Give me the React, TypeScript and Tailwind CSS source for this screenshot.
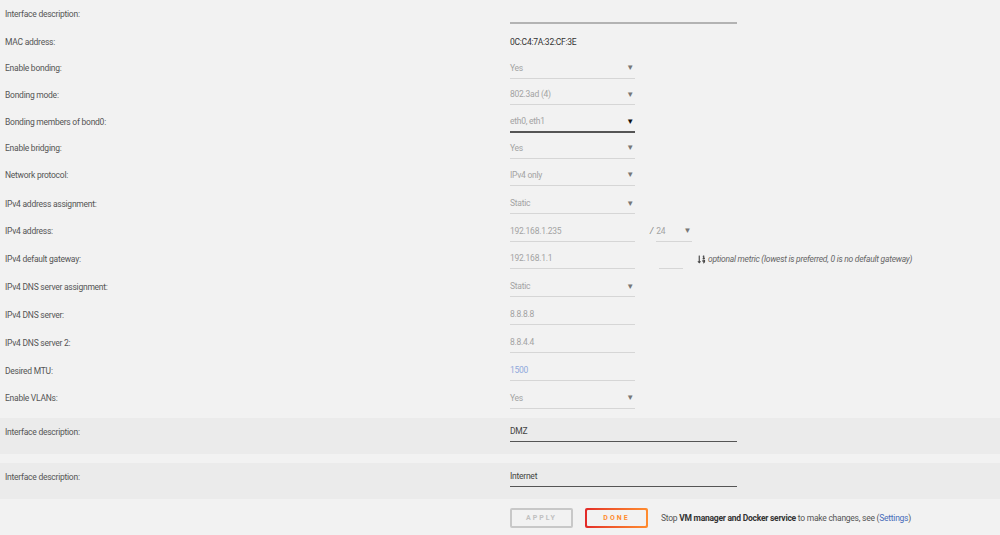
import { FaSortNumericDown } from 'react-icons/fa';

type RowProps = { label: string; h: string; children?: React.ReactNode };

function Row({ label, h, children }: RowProps) {
  return (
    <div className={`flex items-center ${h}`}>
      <div className="w-[510px] pl-[5px] text-[#555]">{label}</div>
      <div className="flex items-center">{children}</div>
    </div>
  );
}

function Select({ value, dark = false }: { value: string; dark?: boolean }) {
  return (
    <div
      className={
        dark
          ? 'w-[125px] h-[20px] flex items-center justify-between pr-[1px] border-b-2 border-[#555]'
          : 'w-[125px] h-[20px] flex items-center justify-between pr-[1px] border-b border-[#d6d6d6]'
      }
    >
      <span className="text-[#a3a3a3]">{value}</span>
      <span className={dark ? 'text-[8px] text-[#111]' : 'text-[8px] text-[#777]'}>▼</span>
    </div>
  );
}

function Input({ value, blue = false }: { value: string; blue?: boolean }) {
  return (
    <div className="w-[125px] h-[20px] flex items-center border-b border-[#d6d6d6]">
      <span className={blue ? 'text-[#8fa8dc]' : 'text-[#a3a3a3]'}>{value}</span>
    </div>
  );
}

export default function App() {
  return (
    <div className="w-[1000px] h-[535px] overflow-hidden bg-[#f2f2f2] font-['Roboto',sans-serif] text-[8.5px] tracking-[-0.25px] leading-none">
      <Row label="Interface description:" h="h-[28px]">
        <div className="w-[227px] h-[20px] border-b-2 border-[#b3b3b3]" />
      </Row>
      <Row label="MAC address:" h="h-[28px]">
        <span className="text-[#333]">0C:C4:7A:32:CF:3E</span>
      </Row>
      <Row label="Enable bonding:" h="h-[25px]">
        <Select value="Yes" />
      </Row>
      <Row label="Bonding mode:" h="h-[28px]">
        <Select value="802.3ad (4)" />
      </Row>
      <Row label="Bonding members of bond0:" h="h-[27px]">
        <Select value="eth0, eth1" dark />
      </Row>
      <Row label="Enable bridging:" h="h-[25px]">
        <Select value="Yes" />
      </Row>
      <Row label="Network protocol:" h="h-[29px]">
        <Select value="IPv4 only" />
      </Row>
      <Row label="IPv4 address assignment:" h="h-[28px]">
        <Select value="Static" />
      </Row>
      <Row label="IPv4 address:" h="h-[27px]">
        <Input value="192.168.1.235" />
        <span className="ml-[15px] mr-[3px] text-[#777] italic">/</span>
        <div className="w-[36px] h-[20px] flex items-center justify-between pr-[1px] border-b border-[#d6d6d6]">
          <span className="text-[#a3a3a3]">24</span>
          <span className="text-[8px] text-[#777]">▼</span>
        </div>
      </Row>
      <Row label="IPv4 default gateway:" h="h-[28px]">
        <Input value="192.168.1.1" />
        <div className="ml-[24px] w-[24px] h-[20px] border-b border-[#d6d6d6]" />
        <FaSortNumericDown className="ml-[14px] text-[#444]" size={9} />
        <span className="ml-[2px] italic text-[#666]">optional metric (lowest is preferred, 0 is no default gateway)</span>
      </Row>
      <Row label="IPv4 DNS server assignment:" h="h-[28px]">
        <Select value="Static" />
      </Row>
      <Row label="IPv4 DNS server:" h="h-[28px]">
        <Input value="8.8.8.8" />
      </Row>
      <Row label="IPv4 DNS server 2:" h="h-[28px]">
        <Input value="8.8.4.4" />
      </Row>
      <Row label="Desired MTU:" h="h-[28px]">
        <Input value="1500" blue />
      </Row>
      <Row label="Enable VLANs:" h="h-[27px]">
        <Select value="Yes" />
      </Row>

      <div className="mt-[6px] h-[36px] bg-[#ebebeb] flex items-start pt-[4px]">
        <div className="w-[510px] pl-[5px] h-[20px] flex items-center text-[#555]">Interface description:</div>
        <div className="w-[227px] h-[20px] flex items-center border-b border-[#555] text-[#444]">DMZ</div>
      </div>
      <div className="mt-[9px] h-[36px] bg-[#ebebeb] flex items-start pt-[4px]">
        <div className="w-[510px] pl-[5px] h-[20px] flex items-center text-[#555]">Interface description:</div>
        <div className="w-[227px] h-[20px] flex items-center border-b border-[#555] text-[#444]">Internet</div>
      </div>

      <div className="mt-[9px] flex items-center pl-[510px]">
        <button className="w-[63px] h-[20px] rounded-[2px] border-2 border-[#c8c8c8] text-[#c0c0c0] text-[7px] font-bold tracking-[2px]">
          APPLY
        </button>
        <div className="ml-[12px] w-[63px] h-[20px] rounded-[2px] p-[2px] bg-gradient-to-r from-[#e22828] to-[#ff8c2f]">
          <div className="w-full h-full rounded-[1px] bg-[#f2f2f2] flex items-center justify-center text-[#ff8c2f] text-[7px] font-bold tracking-[2px]">
            DONE
          </div>
        </div>
        <span className="ml-[13px] text-[#555]">
          Stop <b className="text-[#333]">VM manager and Docker service</b> to make changes, see (
          <span className="text-[#486dba]">Settings</span>)
        </span>
      </div>
    </div>
  );
}
